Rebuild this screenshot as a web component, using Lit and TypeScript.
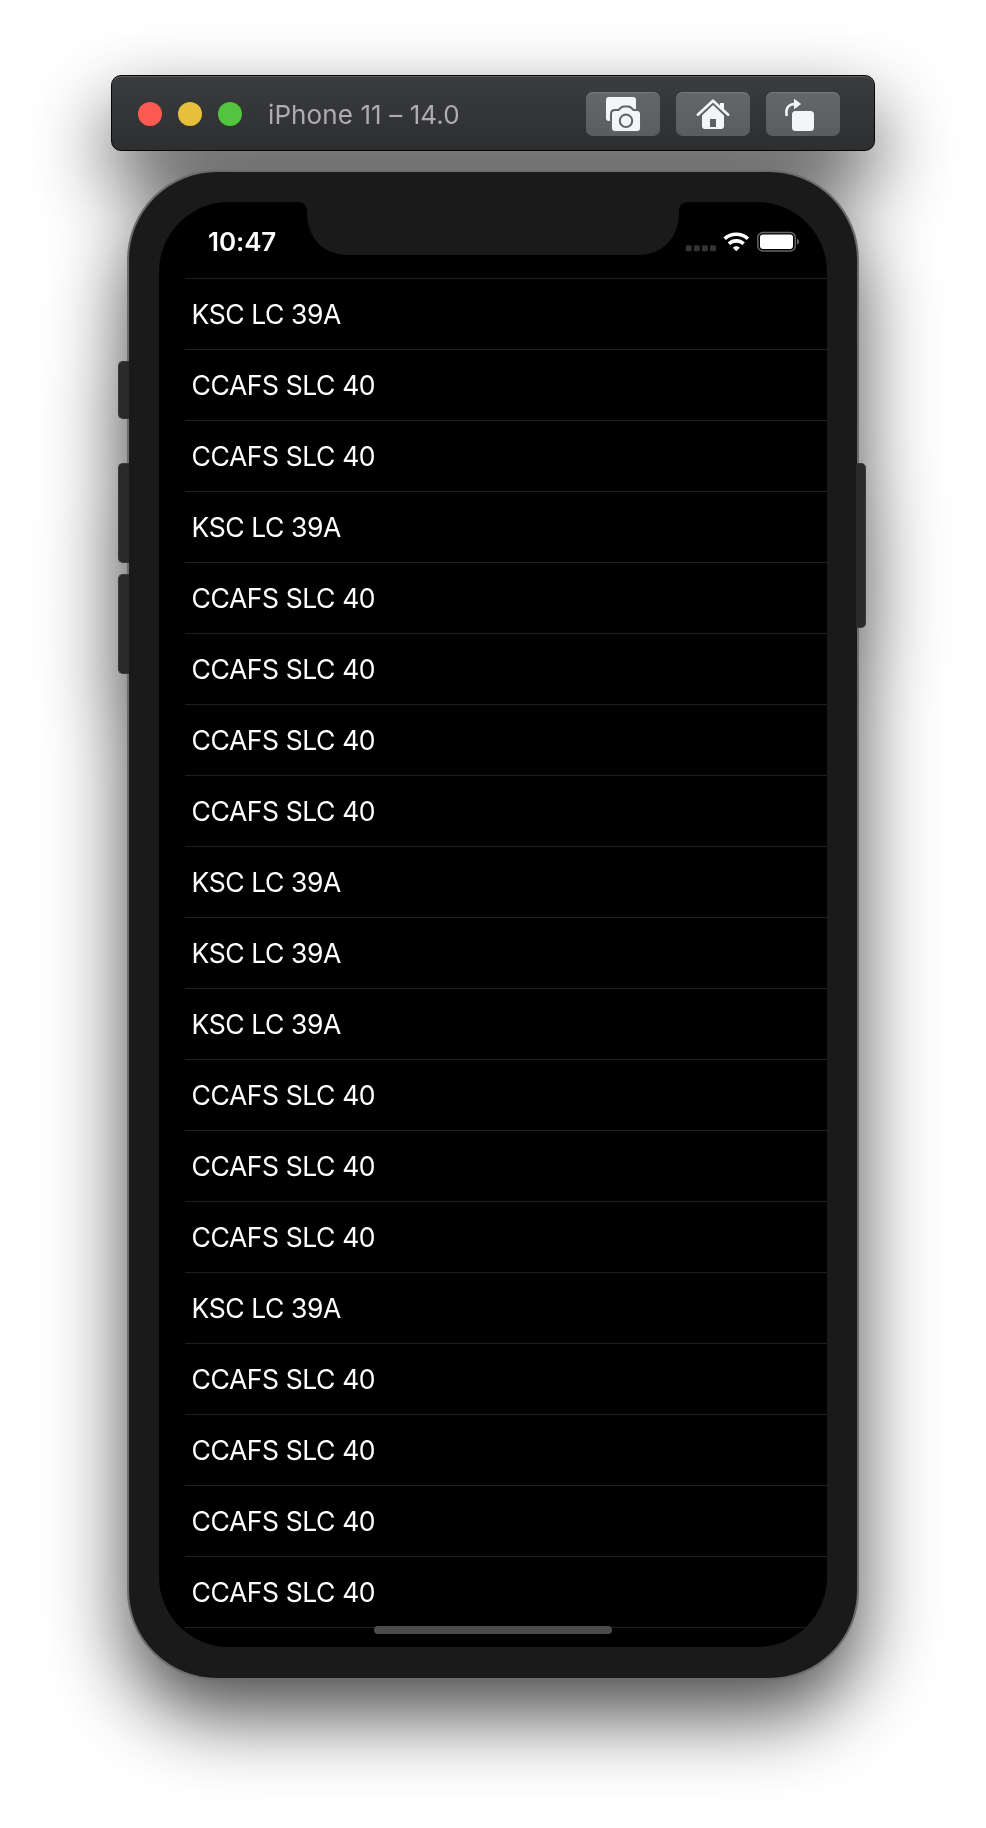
import { LitElement, html, css } from "lit";
import { customElement } from "lit/decorators.js";

const K = "KSC LC 39A";
const C = "CCAFS SLC 40";
const SITES = [K, C, C, K, C, C, C, C, K, K, K, C, C, C, K, C, C, C, C];

@customElement("sim-toolbar")
class SimToolbar extends LitElement {
  static styles = css`
    :host {
      display: flex;
      align-items: center;
      box-sizing: border-box;
      width: 764px;
      height: 76px;
      margin-right: 1px;
      padding: 2px 34px 0 26px;
      border: 1px solid #060606;
      border-radius: 10px;
      background: linear-gradient(#3b3c3e, #2d2e30);
      box-shadow: inset 0 1px 0 #5c5d5f;
    }
    .lights { display: flex; gap: 16px; }
    .light { width: 24px; height: 24px; border-radius: 50%; }
    .close { background: #ff5a52; }
    .min { background: #e6c03a; }
    .max { background: #52c43d; }
    .title {
      flex: 1;
      margin: 2px 0 0 26.500px;
      font: 400 26px/32px Inter, sans-serif;
      letter-spacing: 0.1px;
      color: #adadaf;
      white-space: nowrap;
    }
    .buttons { display: flex; gap: 16px; }
    .button {
      width: 74px;
      height: 44px;
      border-radius: 7px;
      background: linear-gradient(#656668, #5b5c5e);
      box-shadow: inset 0 1px 0 #77787a;
    }
    svg { display: block; }
  `;
  render() {
    return html`
      <div class="lights">
        <div class="light close"></div>
        <div class="light min"></div>
        <div class="light max"></div>
      </div>
      <div class="title">iPhone 11 – 14.0</div>
      <div class="buttons">
        <div class="button">
          <svg width="74" height="44" viewBox="0 0 74 44">
            <rect x="20" y="5" width="30" height="24" rx="3" fill="#f4f5f7"/>
            <path fill="#f4f5f7" stroke="#616264" stroke-width="4" paint-order="stroke" d="M29 19h4l2-2q1-1.500 3-1.500h4q2 0 3 1.500l2 2h4q3 0 3 3v14q0 3-3 3H29q-3 0-3-3V22q0-3 3-3z"/>
            <circle cx="40" cy="28.800" r="6.200" fill="none" stroke="#606163" stroke-width="2"/>
          </svg>
        </div>
        <div class="button">
          <svg width="74" height="44" viewBox="0 0 74 44">
            <path fill="none" stroke="#f4f5f7" stroke-width="2.600" stroke-linecap="round" stroke-linejoin="round" d="M21.800 22.700 37 8.700l15.200 14"/>
            <path fill="#f4f5f7" d="M44 11h4v8l-4-4z"/>
            <path fill="#f4f5f7" fill-rule="evenodd" d="M37 13 48 23.500V34q0 3-3 3H29q-3 0-3-3V23.500zM34 27v8h6v-8z"/>
          </svg>
        </div>
        <div class="button">
          <svg width="74" height="44" viewBox="0 0 74 44">
            <path fill="none" stroke="#f4f5f7" stroke-width="2.600" d="M20.700 24q-2-11.500 8.300-12"/>
            <path fill="#f4f5f7" stroke="#f4f5f7" stroke-linejoin="round" d="m28.500 7.500 6 4.500-6 4.500z"/>
            <rect x="26" y="19" width="22" height="20" rx="3.500" fill="#f4f5f7"/>
          </svg>
        </div>
      </div>
    `;
  }
}

@customElement("status-bar")
class StatusBar extends LitElement {
  static styles = css`
    :host { display: flex; justify-content: space-between; height: 76px; }
    .clock {
      margin: 24px 0 0 49px;
      font: 600 26px/32px Inter, sans-serif;
      letter-spacing: -0.1px;
      color: #fff;
    }
    svg { display: block; }
  `;
  render() {
    return html`
      <div class="clock">10:47</div>
      <svg width="147" height="76" viewBox="680 202 147 76">
        <g fill="#343434">
          <rect x="685.700" y="245.300" width="6" height="6" rx="1.500"/>
          <rect x="693.800" y="245.300" width="6" height="6" rx="1.500"/>
          <rect x="701.900" y="245.300" width="6" height="6" rx="1.500"/>
          <rect x="710" y="245.300" width="6" height="6" rx="1.500"/>
        </g>
        <g fill="none" stroke="#fff" stroke-width="3.600">
          <path d="M724.600 238.800a17 17 0 0 1 23.300 0"/>
          <path d="M729 243.800a10.500 10.500 0 0 1 14.600 0"/>
        </g>
        <path fill="#fff" d="M732.800 247.700a5.500 5.500 0 0 1 7 0l-3.500 3.500z"/>
        <rect x="757.800" y="232.500" width="37.500" height="18.500" rx="5" fill="none" stroke="#666" stroke-width="1.500"/>
        <rect x="760" y="234.600" width="33" height="14.300" rx="2.800" fill="#fff"/>
        <path fill="#666" d="M797 238.800q2.200.8 2.200 3t-2.200 3z"/>
      </svg>
    `;
  }
}

@customElement("app-root")
class AppRoot extends LitElement {
  static styles = css`
    :host {
      display: block;
      box-sizing: border-box;
      height: 1828px;
      padding-top: 75px;
      overflow: hidden;
      background: #fff;
    }
    .window {
      display: flex;
      flex-direction: column;
      align-items: center;
      filter: drop-shadow(0 35px 39px rgba(0, 0, 0, 0.7));
    }
    .device {
      position: relative;
      box-sizing: border-box;
      width: 732px;
      height: 1510px;
      margin-top: 19px;
      padding: 30px 30px;
      border: 2px solid #6c6c6c;
      border-radius: 90px;
      background: #1a1a1a;
    }
    .key {
      position: absolute;
      box-sizing: border-box;
      width: 11px;
      border: 1px solid #383838;
      background: #2a2a2a;
    }
    .left { left: -11px; border-right: 0; border-radius: 5px 0 0 5px; }
    .right { right: -9px; width: 10px; border-left: 0; border-radius: 3px 5px 5px 3px; }
    .mute { top: 189px; height: 58px; }
    .up { top: 291px; height: 100px; }
    .down { top: 402px; height: 100px; }
    .power { top: 291px; height: 165px; }
    .screen {
      position: relative;
      width: 668px;
      height: 1445px;
      border-radius: 70px;
      overflow: hidden;
      background: #000;
    }
    .notch { position: absolute; top: 0; left: 139px; }
    .list { margin: 0 0 0 26px; padding: 0; list-style: none; }
    .row {
      box-sizing: border-box;
      height: 71px;
      padding: 18px 0 0 6.500px;
      border-top: 1px solid #202020;
      font: 400 26.500px/34px Inter, sans-serif;
      letter-spacing: -0.4px;
      color: #fff;
      white-space: nowrap;
    }
    .row:last-child { height: 72px; border-bottom: 1px solid #202020; }
    .home {
      position: absolute;
      left: 215px;
      top: 1424px;
      width: 238px;
      height: 8px;
      border-radius: 4px;
      background: #4c4c4c;
    }
  `;
  render() {
    return html`
      <div class="window">
        <sim-toolbar></sim-toolbar>
        <div class="device">
          <div class="key left mute"></div>
          <div class="key left up"></div>
          <div class="key left down"></div>
          <div class="key right power"></div>
          <div class="screen">
            <status-bar></status-bar>
            <svg class="notch" width="390" height="54" viewBox="298 202 390 54">
              <path fill="#1a1a1a" d="M298 202q9 0 9 10c0 26 16 43 42 43h288c26 0 42-17 42-43q0-10 9-10z"/>
            </svg>
            <ul class="list">
              ${SITES.map((site) => html`<li class="row">${site}</li>`)}
            </ul>
            <div class="home"></div>
          </div>
        </div>
      </div>
    `;
  }
}
